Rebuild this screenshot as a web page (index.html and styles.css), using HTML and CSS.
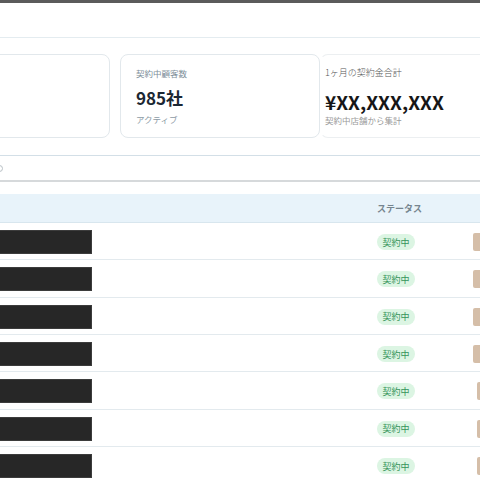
FILE: index.html
```html
<!DOCTYPE html>
<html>
<head>
    <meta charset="utf-8">
    <link rel="stylesheet" href="styles.css">
</head>
<body>
    <div class="topbar"></div>
    <div class="header"></div>

    <div class="page">
        <div class="main">
            <!-- Summary cards -->
            <div class="cards">
                <div class="card"></div>
                <div class="card">
                    <div class="card-label">契約中顧客数</div>
                    <div class="card-value">985社</div>
                    <div class="card-sub">アクティブ</div>
                </div>
                <div class="card card-wide">
                    <div class="card-label">1ヶ月の契約金合計</div>
                    <div class="card-value">¥XX,XXX,XXX</div>
                    <div class="card-sub">契約中店舗から集計</div>
                </div>
            </div>

            <!-- Search -->
            <div class="search">
                <span class="search-icon"></span>
            </div>

            <!-- Customer table -->
            <div class="table">
                <div class="row head">
                    <div class="cell"></div>
                    <div class="cell">ステータス</div>
                    <div class="cell"></div>
                </div>
                <div class="row">
                    <div class="cell"><div class="masked"></div></div>
                    <div class="cell"><span class="badge">契約中</span></div>
                    <div class="cell"><div class="action"></div></div>
                </div>
                <div class="row">
                    <div class="cell"><div class="masked"></div></div>
                    <div class="cell"><span class="badge">契約中</span></div>
                    <div class="cell"><div class="action"></div></div>
                </div>
                <div class="row">
                    <div class="cell"><div class="masked"></div></div>
                    <div class="cell"><span class="badge">契約中</span></div>
                    <div class="cell"><div class="action"></div></div>
                </div>
                <div class="row">
                    <div class="cell"><div class="masked"></div></div>
                    <div class="cell"><span class="badge">契約中</span></div>
                    <div class="cell"><div class="action"></div></div>
                </div>
                <div class="row">
                    <div class="cell"><div class="masked"></div></div>
                    <div class="cell"><span class="badge">契約中</span></div>
                    <div class="cell"><div class="action short"></div></div>
                </div>
                <div class="row">
                    <div class="cell"><div class="masked"></div></div>
                    <div class="cell"><span class="badge">契約中</span></div>
                    <div class="cell"><div class="action short"></div></div>
                </div>
                <div class="row">
                    <div class="cell"><div class="masked"></div></div>
                    <div class="cell"><span class="badge">契約中</span></div>
                    <div class="cell"><div class="action short"></div></div>
                </div>
            </div>
        </div>
    </div>
</body>
</html>
```

FILE: styles.css
```css
html, body {
    margin: 0;
    padding: 0;
    overflow: hidden;
    background: #ffffff;
}

body {
    width: 480px;
    height: 480px;
    font-family: "Noto Sans CJK JP", "Noto Sans", sans-serif;
    color: #1b2733;
}

.topbar {
    height: 3px;
    background: #5b5b5b;
}

.header {
    height: 34px;
    border-bottom: 1px solid #e4ecf0;
}

.page {
    width: 480px;
    height: 442px;
    overflow: hidden;
}

.main {
    margin-left: -90px;
    width: 700px;
    padding-top: 16px;
}

.cards {
    display: grid;
    grid-template-columns: 200px 200px 220px;
    column-gap: 10px;
}

.card {
    box-sizing: border-box;
    height: 84px;
    padding: 12px 15px 0 15px;
    border: 1px solid #e2e8ec;
    border-radius: 8px;
}

.card-label {
    font-size: 8.5px;
    line-height: 12px;
    color: #7d8e99;
}

.card-value {
    margin-top: 8px;
    font-size: 17px;
    line-height: 22px;
    font-weight: bold;
    color: #1b2733;
}

.card-sub {
    margin-top: 4px;
    font-size: 8.5px;
    line-height: 12px;
    color: #8c9ba5;
}

.card-wide {
    margin-left: -10px;
    padding-left: 4px;
    border-color: #eceff1;
    border-left-color: transparent;
}

.card-wide .card-label {
    font-size: 9px;
    color: #555;
    font-weight: 300;
}

.card-wide .card-value {
    margin-top: 11px;
    font-size: 19px;
    line-height: 24px;
    font-weight: bold;
    color: #161616;
}

.card-wide .card-sub {
    margin-top: 0;
    color: #9a9a9a;
}

.search {
    box-sizing: border-box;
    height: 27px;
    margin-top: 17px;
    border-top: 1px solid #d3dfe7;
    border-bottom: 2px solid #d6d9db;
    display: flex;
    align-items: center;
    padding-left: 86px;
}

.search-icon {
    width: 5px;
    height: 5px;
    border: 1px solid #b8c0c5;
    border-radius: 50%;
}

.table {
    margin-top: 12px;
}

.row {
    box-sizing: border-box;
    height: 37.33px;
    padding-top: 2px;
    display: grid;
    grid-template-columns: 467px 96px 137px;
    align-items: center;
    border-bottom: 1px solid #e3eaee;
}

.row.head {
    height: 29px;
    padding-top: 1px;
    background: #e8f3fa;
    border-bottom-color: #d8e6ee;
    font-size: 9px;
    font-weight: 700;
    color: #76858f;
}

.cell {
    display: flex;
    align-items: center;
}

.masked {
    box-sizing: border-box;
    margin-left: 16px;
    width: 166px;
    height: 24px;
    background: #272727;
    border: 1px solid #3c3c3c;
}

.badge {
    display: inline-flex;
    align-items: center;
    justify-content: center;
    width: 38px;
    height: 16px;
    border-radius: 8px;
    background: #dcf5e3;
    color: #35945a;
    font-size: 9px;
}

.action {
    width: 40px;
    height: 18px;
    background: #d5bea8;
    border-radius: 2px;
}

.action.short {
    margin-left: 4px;
}
```
